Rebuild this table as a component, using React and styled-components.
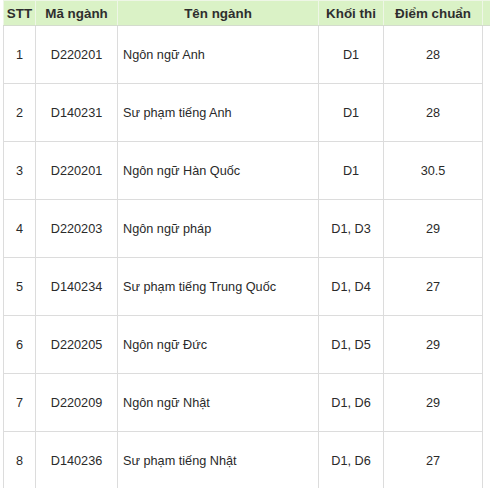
import React from 'react';
import styled, { createGlobalStyle } from 'styled-components';

const GlobalStyle = createGlobalStyle`
  html, body {
    margin: 0;
    padding: 0;
    background: #fff;
    overflow: hidden;
  }
  body {
    font-family: "Liberation Sans", Arial, sans-serif;
  }
`;

const Wrap = styled.div`
  width: 490px;
  height: 488px;
  overflow: hidden;
  padding-left: 3px;
`;

const Table = styled.table`
  border-collapse: collapse;
  table-layout: fixed;
  width: 560px;
  color: #333;
`;

const HeadCell = styled.th`
  background: #daf2c6;
  border: 1px solid #eef6e6;
  border-bottom-color: #d4dccd;
  height: 24px;
  padding: 0;
  font-size: 13.4px;
  font-weight: bold;
  text-align: center;
  color: #2e2e2e;
`;

const Cell = styled.td`
  border: 1px solid #dcdcdc;
  height: 57px;
  padding: 0 ${(p) => (p.left ? '5px' : '0')};
  font-size: 12.7px;
  text-align: ${(p) => (p.left ? 'left' : 'center')};
  vertical-align: middle;
  color: #2a2a2a;
`;

const EmptyCell = styled(Cell)`
  border-right: none;
  border-top: none;
  border-bottom: none;
`;

const rows = [
  ['1', 'D220201', 'Ngôn ngữ Anh', 'D1', '28'],
  ['2', 'D140231', 'Sư phạm tiếng Anh', 'D1', '28'],
  ['3', 'D220201', 'Ngôn ngữ Hàn Quốc', 'D1', '30.5'],
  ['4', 'D220203', 'Ngôn ngữ pháp', 'D1, D3', '29'],
  ['5', 'D140234', 'Sư phạm tiếng Trung Quốc', 'D1, D4', '27'],
  ['6', 'D220205', 'Ngôn ngữ Đức', 'D1, D5', '29'],
  ['7', 'D220209', 'Ngôn ngữ Nhật', 'D1, D6', '29'],
  ['8', 'D140236', 'Sư phạm tiếng Nhật', 'D1, D6', '27'],
];

export default function App() {
  return (
    <Wrap>
      <GlobalStyle />
      <Table>
        <colgroup>
          <col style={{ width: 32 }} />
          <col style={{ width: 82 }} />
          <col style={{ width: 201 }} />
          <col style={{ width: 65 }} />
          <col style={{ width: 99 }} />
          <col style={{ width: 81 }} />
        </colgroup>
        <thead>
          <tr>
            <HeadCell>STT</HeadCell>
            <HeadCell>Mã ngành</HeadCell>
            <HeadCell>Tên ngành</HeadCell>
            <HeadCell>Khối thi</HeadCell>
            <HeadCell>Điểm chuẩn</HeadCell>
            <HeadCell />
          </tr>
        </thead>
        <tbody>
          {rows.map((r, i) => (
            <tr key={i}>
              <Cell>{r[0]}</Cell>
              <Cell>{r[1]}</Cell>
              <Cell left>{r[2]}</Cell>
              <Cell>{r[3]}</Cell>
              <Cell>{r[4]}</Cell>
              <EmptyCell />
            </tr>
          ))}
        </tbody>
      </Table>
    </Wrap>
  );
}
